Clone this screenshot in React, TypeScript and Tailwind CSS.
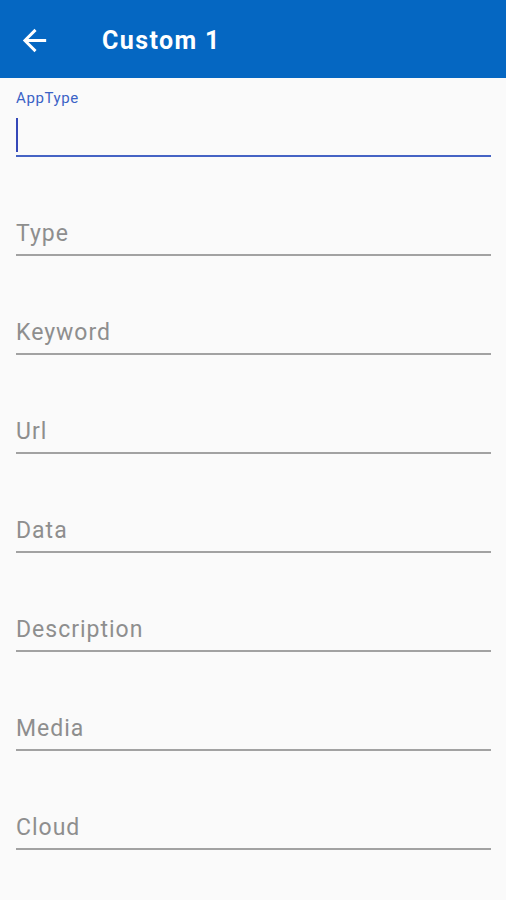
import React from "react";

const fields = ["Type", "Keyword", "Url", "Data", "Description", "Media", "Cloud"];

export default function App() {
  return (
    <div
      className="w-[506px] h-[900px] bg-[#fafafa] overflow-hidden"
      style={{ fontFamily: "Roboto, 'Noto Sans', sans-serif" }}
    >
      <div className="h-[78px] bg-[#0567c2] flex items-center">
        <div className="w-[102px] flex items-center pl-[17px] pt-[2px]">
          <svg width="35" height="35" viewBox="0 0 24 24" fill="#ffffff">
            <path d="M20 11H7.83l5.59-5.59L12 4l-8 8 8 8 1.41-1.41L7.83 13H20v-2z" />
          </svg>
        </div>
        <div className="text-white text-[25px] font-bold leading-none tracking-[1.4px] pt-[3px]">
          Custom 1
        </div>
      </div>

      <div className="pl-4 pr-[15px]">
        <div className="pt-[12px]">
          <div className="text-[15px] leading-[16px] tracking-[0.6px] text-[#3a62c6]">AppType</div>
          <div className="mt-[12px] h-[34px] w-[2px] bg-[#3548b8]" />
          <div className="mt-[3px] h-[2px] bg-[#4563c4]" />
        </div>
        {fields.map((f) => (
          <div key={f} className="h-[99px] flex flex-col justify-end">
            <div className="text-[23px] leading-[26px] tracking-[1px] text-[#8e8e8e]">{f}</div>
            <div className="mt-[7px] h-[2px] bg-[#a2a2a2]" />
          </div>
        ))}
      </div>
    </div>
  );
}
